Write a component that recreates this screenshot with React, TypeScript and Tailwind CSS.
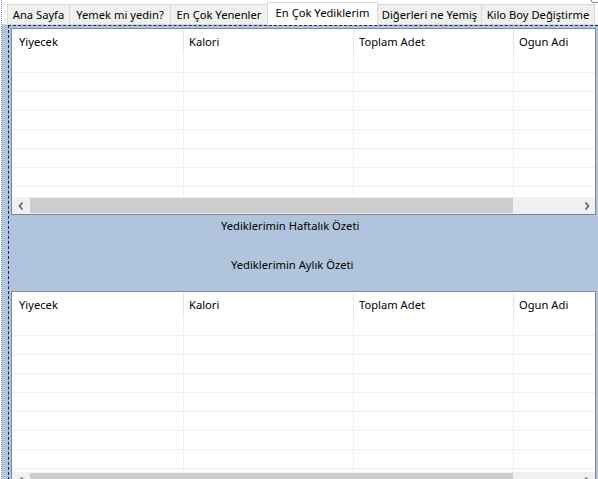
import React from 'react';

interface Column {
  label: string;
  width: string;
  pad: string;
}

const columns: Column[] = [
  { label: 'Yiyecek', width: 'w-[172px]', pad: 'pl-[7px]' },
  { label: 'Kalori', width: 'w-[170px]', pad: 'pl-[5px]' },
  { label: 'Toplam Adet', width: 'w-[160px]', pad: 'pl-[5px]' },
  { label: 'Ogun Adi', width: 'flex-1', pad: 'pl-[5px]' },
];

const tabs = [
  { label: 'Ana Sayfa', width: 'w-[63px]' },
  { label: 'Yemek mi yedin?', width: 'w-[102px]' },
  { label: 'En Çok Yenenler', width: 'w-[98px]' },
  { label: 'En Çok Yediklerim', width: 'w-[111px]', active: true },
  { label: 'Diğerleri ne Yemiş', width: 'w-[105px]' },
  { label: 'Kilo Boy Değiştirme', width: 'w-[114px]' },
];

const Chevron = ({ dir }: { dir: 'left' | 'right' }) => (
  <svg width="6" height="8" viewBox="0 0 6 8" className="block">
    {dir === 'left' ? (
      <path d="M4.5 0.5 L1.5 4 L4.5 7.5" fill="none" stroke="#606060" strokeWidth="1.6" />
    ) : (
      <path d="M1.5 0.5 L4.5 4 L1.5 7.5" fill="none" stroke="#606060" strokeWidth="1.6" />
    )}
  </svg>
);

const ScrollBar = () => (
  <div className="flex h-[17px] shrink-0 bg-[#f0f0f0]">
    <div className="w-[17px] flex items-center justify-center">
      <Chevron dir="left" />
    </div>
    <div className="flex-1 flex py-[1px]">
      <div className="ml-[1px] w-[483px] bg-[#cdcdcd]" />
    </div>
    <div className="w-[17px] flex items-center justify-center">
      <Chevron dir="right" />
    </div>
  </div>
);

const Row = ({ height = 'h-[19px]', line = true }: { height?: string; line?: boolean }) => (
  <div className={`flex shrink-0 ${height} ${line ? 'border-b border-[#f0f0f0]' : ''}`}>
    {columns.map((col, i) => (
      <div
        key={col.label}
        className={`${col.width} ${i < columns.length - 1 ? 'border-r border-[#f0f0f0]' : ''}`}
      />
    ))}
  </div>
);

const DataGrid = ({ rows, partial }: { rows: number; partial: string }) => (
  <div className="w-[585px] border border-[#828790] bg-white flex flex-col shrink-0">
    <div className="flex h-[25px] shrink-0">
      {columns.map((col, i) => (
        <div key={col.label} className={`${col.width} flex items-center relative`}>
          <span className={`${col.pad} pt-[1px]`}>{col.label}</span>
          {i < columns.length - 1 && (
            <div className="absolute right-0 top-[1px] bottom-[1px] w-px bg-[#e5e5e5]" />
          )}
        </div>
      ))}
    </div>
    {Array.from({ length: rows }).map((_, i) => (
      <Row key={i} />
    ))}
    <Row height={partial} line={false} />
    <ScrollBar />
  </div>
);

const App = () => {
  return (
    <div className="w-[598px] h-[479px] overflow-hidden bg-white text-[11.2px] leading-[16px] text-black font-['Noto_Sans',sans-serif] relative">
      <div className="absolute right-[-2px] top-[-4px] w-[9px] h-[7px] border border-[#8c8c8c] rounded-[2px] bg-white" />
      <div className="ml-[1px] h-full border-l border-dotted border-[#7f96b8] flex flex-col">
        <div className="h-[24px] flex items-end pl-[5px] shrink-0">
          {tabs.map((tab, i) =>
            tab.active ? (
              <div
                key={tab.label}
                className={`${tab.width} ${i > 0 ? '-ml-px' : ''} h-[23px] -mb-px relative z-10 bg-white border border-b-0 border-[#d9d9d9] flex justify-center pt-[2px]`}
              >
                {tab.label}
              </div>
            ) : (
              <div
                key={tab.label}
                className={`${tab.width} ${i > 0 ? '-ml-px' : ''} h-[20px] bg-[#f0f0f0] border border-b-0 border-[#d9d9d9] flex justify-center pt-[2px]`}
              >
                {tab.label}
              </div>
            )
          )}
        </div>
        <div className="flex-1 border-t border-[#d9d9d9] bg-[#b0c4de] pl-[6px] flex flex-col">
          <div className="flex-1 border-l border-t border-dashed border-[#1c2a4a] pl-[2px] pt-[2px] flex flex-col">
            <DataGrid rows={7} partial="h-[10px]" />
            <div className="h-[76px] shrink-0 flex flex-col">
              <div className="pl-[210px] pt-[3px]">Yediklerimin Haftalık Özeti</div>
              <div className="pl-[220px] pt-[23px]">Yediklerimin Aylık Özeti</div>
            </div>
            <DataGrid rows={8} partial="h-[3px]" />
          </div>
        </div>
      </div>
    </div>
  );
};

export default App;
